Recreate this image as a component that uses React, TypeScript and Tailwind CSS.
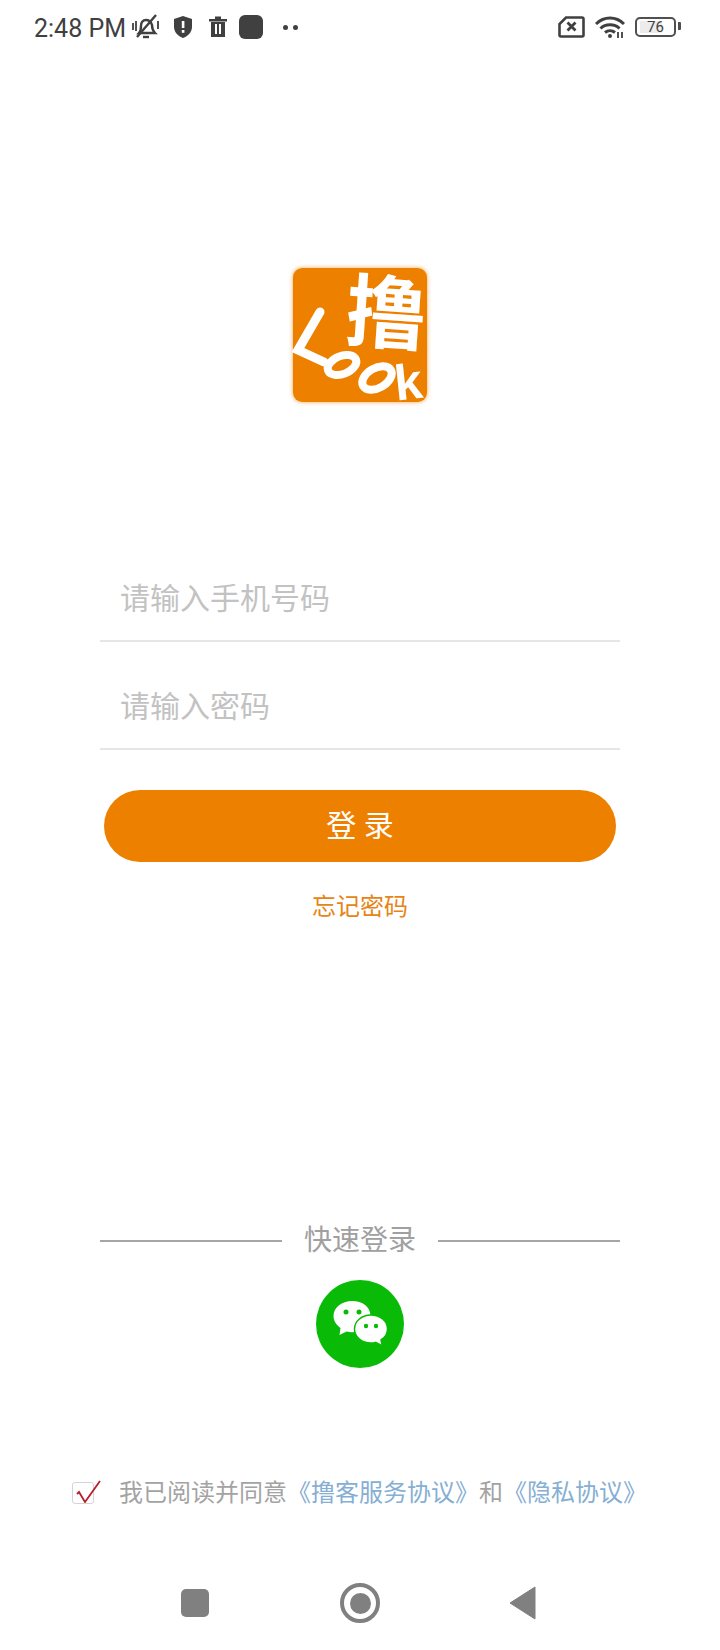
import React from 'react';

const cjk = "font-['Roboto','Noto_Sans_CJK_SC','Noto_Sans_CJK_JP',sans-serif]";

const StatusBar = () => (
    <div className="flex h-[54px] items-center justify-between pl-[34px] pr-[44px] text-[#404040]">
        <div className="flex items-center">
            <span className="mt-[2px] w-[92px] shrink-0 font-['Roboto',sans-serif] text-[25px] leading-none whitespace-nowrap">2:48 PM</span>
            <svg className="ml-[5px] h-[28px] w-[30px]" viewBox="0 0 30 28" fill="none" stroke="#404040" strokeWidth="2.4">
                <path d="M8 20c2-2 2-4 2-7 0-4 2-6 5-6s5 2 6 5c0 4 1 6 3 8z" />
                <path d="M12 24h6" />
                <path d="M25 2 6 24" />
                <path d="M2 10v7M5 8v10M27 8v8" strokeWidth="1.8" />
            </svg>
            <svg className="ml-[12px] h-[24px] w-[20px]" viewBox="0 0 20 24">
                <path d="M10 1 19 4v8c0 5-4 9-9 11C5 21 1 17 1 12V4z" fill="#404040" />
                <rect x="8.8" y="6" width="2.6" height="7" fill="#fff" />
                <rect x="8.8" y="15" width="2.6" height="2.8" fill="#fff" />
            </svg>
            <svg className="ml-[15px] h-[24px] w-[20px]" viewBox="0 0 20 24">
                <path d="M1 4h18v2.5H1zM7 1.500h6V4H7z" fill="#404040" />
                <path d="M3 7h14v15H3z" fill="#404040" />
                <rect x="7" y="9" width="2" height="10" fill="#fff" />
                <rect x="11" y="9" width="2" height="10" fill="#fff" />
            </svg>
            <div className="ml-[11px] h-[24px] w-[24px] rounded-[6px] bg-[#404040]" />
            <div className="ml-[20px] flex gap-[5px]">
                <div className="h-[5px] w-[5px] rounded-full bg-[#404040]" />
                <div className="h-[5px] w-[5px] rounded-full bg-[#404040]" />
            </div>
        </div>
        <div className="flex items-center">
            <svg className="h-[22px] w-[27px]" viewBox="0 0 27 22" fill="none" stroke="#404040">
                <path d="M8 1.500h16a1.500 1.500 0 0 1 1.500 1.500v16a1.500 1.500 0 0 1-1.500 1.500H3A1.500 1.500 0 0 1 1.500 19V8z" strokeWidth="2.6" />
                <path d="M9.500 6.500l8 8M17.500 6.500l-8 8" strokeWidth="2.8" />
            </svg>
            <svg className="ml-[10px] h-[24px] w-[30px]" viewBox="0 0 30 24" fill="none" stroke="#404040" strokeWidth="3">
                <path d="M1 9c8-8 20-8 28 0" />
                <path d="M5.500 13.500c5-5 14-5 19 0" />
                <path d="M10 17.500c3-2.500 7-2.500 10 0" />
                <circle cx="15" cy="21" r="2" fill="#404040" stroke="none" />
                <path d="M23 17v6M27 17v6" strokeWidth="1.800" />
            </svg>
            <div className="relative ml-[10px] flex h-[20px] w-[41px] items-center justify-center rounded-[5px] border-[2px] border-[#505050]">
                <div className="absolute top-[2px] bottom-[2px] left-[3px] w-[22px] bg-[#ececec]" />
                <span className="relative font-['Roboto',sans-serif] text-[15px] leading-none text-[#404040]">76</span>
                <div className="absolute top-[3px] right-[-7px] h-[8px] w-[3px] rounded-r-[1px] bg-[#505050]" />
            </div>
        </div>
    </div>
);

const Logo = () => (
    <svg className="h-[134px] w-[134px] overflow-visible rounded-[9px] shadow-[0_0_4px_rgba(238,128,0,0.7)]" viewBox="0 0 134 134">
        <rect width="134" height="134" rx="9" fill="#ee8000" />
        <text x="91" y="74" textAnchor="middle" fontSize="80" fontWeight="700" fill="#fff" fontFamily="'Noto Sans CJK SC',sans-serif" transform="rotate(4 91 74)">撸</text>
        <path d="M27 44 5 82l26 12" fill="none" stroke="#fff" strokeWidth="9" strokeLinecap="round" />
        <ellipse cx="49" cy="97" rx="15" ry="9" fill="none" stroke="#fff" strokeWidth="8" transform="rotate(-22 49 97)" />
        <ellipse cx="84" cy="110" rx="16" ry="10" fill="none" stroke="#fff" strokeWidth="8" transform="rotate(-30 84 110)" />
        <text x="117" y="131" textAnchor="middle" fontSize="50" fontWeight="700" fill="#fff" fontFamily="'Liberation Sans',sans-serif" transform="rotate(-6 117 131)">k</text>
    </svg>
);

const Field = ({ placeholder }: { placeholder: string }) => (
    <div className="flex h-[58px] items-start border-b-[2px] border-[#e6e6e6] pl-[20px]">
        <span className="text-[30px] leading-[30px] text-[#c2c2c2]">{placeholder}</span>
    </div>
);

const WeChat = () => (
    <div className="flex h-[88px] w-[88px] items-center justify-center rounded-full bg-[#09bb07]">
        <svg className="h-[50px] w-[56px]" viewBox="0 0 56 50">
            <path d="M20 2C10 2 1.500 8.500 1.500 17c0 5 3 9 7 12l-1 7 7-3.500c2 .5 3.500.7 5.500.7 10.500 0 18.500-7 18.500-16.200S30.500 2 20 2z" fill="#fff" />
            <circle cx="14" cy="13" r="2.500" fill="#09bb07" />
            <circle cx="27" cy="13" r="2.500" fill="#09bb07" />
            <path d="M39 16c-9 0-16.500 6-16.500 14S30 44 39 44c1.500 0 3-.2 4.500-.6l7 3.600-1.500-6c4-2.500 6.500-6.300 6.500-11 0-8-7.500-14-16.500-14z" fill="#fff" stroke="#09bb07" strokeWidth="1.500" />
            <circle cx="34" cy="27" r="2.200" fill="#09bb07" />
            <circle cx="44" cy="27" r="2.200" fill="#09bb07" />
        </svg>
    </div>
);

const App: React.FC = () => {
    return (
        <div className={`flex h-[1650px] w-[720px] flex-col bg-white ${cjk}`}>
            <StatusBar />

            <div className="mt-[214px] flex justify-center pr-[1px]">
                <Logo />
            </div>

            <div className="mt-[182px] flex flex-col gap-[50px] px-[100px]">
                <Field placeholder="请输入手机号码" />
                <Field placeholder="请输入密码" />
            </div>

            <button className="mx-[104px] mt-[40px] flex h-[72px] items-center justify-center rounded-full bg-[#ee8000] text-[30px] leading-none text-white">
                登 录
            </button>
            <div className="mt-[30px] text-center text-[24px] leading-[30px] text-[#e68415]">忘记密码</div>

            <div className="mt-[300px] flex items-center px-[100px]">
                <div className="h-[2px] flex-1 bg-[#a6a6a6]" />
                <span className="mx-[22px] text-[28px] leading-[38px] text-[#a0a0a0]">快速登录</span>
                <div className="h-[2px] flex-1 bg-[#a6a6a6]" />
            </div>
            <div className="mt-[20px] flex justify-center">
                <WeChat />
            </div>

            <div className="mt-[108px] flex h-[34px] items-center pl-[72px]">
                <div className="relative h-[22px] w-[22px] rounded-[3px] border border-[#d4d4d4]">
                    <svg className="absolute top-[-8px] left-[2px] h-[28px] w-[26px]" viewBox="0 0 26 28" fill="none" stroke="#b8202a" strokeWidth="1.800">
                        <path d="M2 19l2-2 6 10L25 6" />
                    </svg>
                </div>
                <span className="ml-[25px] text-[24px] leading-[34px] whitespace-nowrap text-[#a3a3a3]">
                    我已阅读并同意<span className="text-[#86afd3]">《撸客服务协议》</span>和<span className="text-[#86afd3]">《隐私协议》</span>
                </span>
            </div>

            <div className="mt-[73px] flex items-center pl-[181px]">
                <div className="h-[28px] w-[28px] rounded-[5px] bg-[#808080]" />
                <div className="ml-[131px] flex h-[40px] w-[40px] items-center justify-center rounded-full border-[4px] border-[#808080]">
                    <div className="h-[21px] w-[21px] rounded-full bg-[#808080]" />
                </div>
                <svg className="ml-[129px] h-[34px] w-[27px]" viewBox="0 0 27 34">
                    <path d="M26 1v32L1 17z" fill="#808080" stroke="#808080" strokeLinejoin="round" />
                </svg>
            </div>
        </div>
    );
};

export default App;
